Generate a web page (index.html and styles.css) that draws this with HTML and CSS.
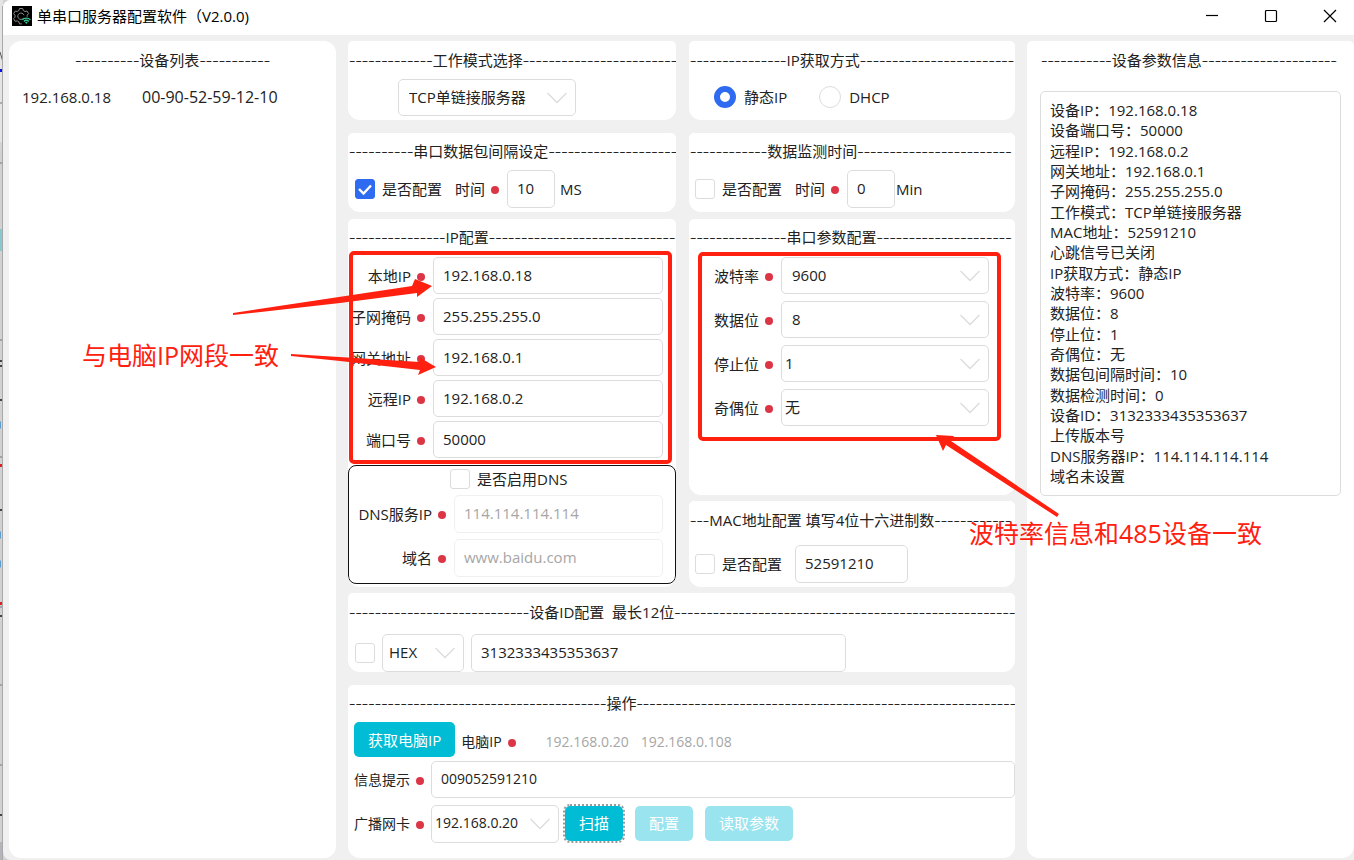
FILE: index.html
```
<!DOCTYPE html>
<html lang="zh-CN">
<head>
<meta charset="utf-8">
<title>单串口服务器配置软件（V2.0.0）</title>
<link rel="stylesheet" href="styles.css">
</head>
<body>
<div class="desktop">
  <svg class="backdrop" viewBox="0 0 3 860" preserveAspectRatio="none" aria-hidden="true">
    <rect width="3" height="860" fill="#d2d2d2"/>
    <rect y="0" width="3" height="142" fill="#e4e4e4"/>
    <rect y="142" width="3" height="8" fill="#d4d4d4"/>
    <rect y="229" width="3" height="22" fill="#86c9cf"/>
    <path d="M0 52l3 10" stroke="#555" stroke-width="1"/>
    <rect y="69" width="3" height="3" fill="#0a10e0"/>
    <path d="M0 103h3M0 163h3M0 340h3M0 457h3M0 607h3M0 685h3M0 765h3" stroke="#777" stroke-width="1"/>
    <path d="M0 361h3M0 366h3M0 400h3M0 510h3M0 616h3M0 815h3" stroke="#444" stroke-width="2"/>
    <path d="M0 425h1M0 535h1M0 564h1" stroke="#5b9fd0" stroke-width="7"/>
    <rect y="464" width="3" height="3" fill="#e02020"/>
    <rect y="602" width="3" height="3" fill="#e02020"/>
    <rect y="842" width="3" height="18" fill="#b4b4ba"/>
    <path d="M2.500 6V860" stroke="#a8a8a8" stroke-width="1"/>
  </svg>

  <div class="window">
    <header class="titlebar">
      <svg class="app-icon" viewBox="0 0 20 20" aria-hidden="true">
        <rect width="20" height="20" fill="#000"/>
        <path d="M7.500 2.500h3.200l.6 2 1.700 1 2-.5 1.600 2.700-1.400 1.500v1.600M7.500 2.500l-.6 2-1.700 1-2-.5L1.600 7.700 3 9.200v2l-1.400 1.500 1.600 2.700 2-.5 1.700 1 .6 2h2.400" fill="none" stroke="#8b8b8b" stroke-width="1"/>
        <path d="M11.500 12.200a3.200 3.200 0 1 1 .5-3" fill="none" stroke="#8b8b8b" stroke-width="1"/>
        <path d="M10.300 13.800c2.300-2.200 5.800-2.200 8.100 0M11.900 15.500c1.400-1.400 3.500-1.400 4.900 0" fill="none" stroke="#35c795" stroke-width="1.300"/>
        <path d="M13 16.300c.8-.7 1.900-.7 2.700 0L14.350 18z" fill="#35c795"/>
      </svg>
      <h1 class="title">单串口服务器配置软件（V2.0.0)</h1>
      <div class="window-buttons">
        <button type="button" aria-label="最小化"><svg viewBox="0 0 14 14"><path d="M1 6.500h12"/></svg></button>
        <button type="button" aria-label="最大化"><svg viewBox="0 0 14 14"><rect x="1.500" y="1.500" width="11" height="11" rx="1"/></svg></button>
        <button type="button" aria-label="关闭"><svg viewBox="0 0 14 14"><path d="M1 1l12 12M13 1L1 13"/></svg></button>
      </div>
    </header>

    <main class="content">
      <section class="card card-list">
        <h2 class="head"><span class="dash">----------</span>设备列表<span class="dash">-----------</span></h2>
        <div class="device"><span>192.168.0.18</span><span class="mac-address">00-90-52-59-12-10</span></div>
      </section>

      <div class="middle">
        <div class="pair">
          <div class="column">
            <section class="card card-mode">
              <h2 class="head"><span class="dash">-------------</span>工作模式选择<span class="dash">------------------------</span></h2>
              <div class="row"><select class="field select mode" aria-label="工作模式选择"><option>TCP单链接服务器</option></select></div>
            </section>

            <section class="card card-timer">
              <h2 class="head"><span class="dash">----------</span>串口数据包间隔设定<span class="dash">--------------------</span></h2>
              <div class="row timer">
                <label class="check"><input type="checkbox" checked>是否配置</label>
                <label class="caption" for="gap">时间<i class="dot"></i></label>
                <input class="field short" id="gap" value="10"><span class="unit">MS</span>
              </div>
            </section>

            <section class="card card-ip">
              <h2 class="head"><span class="dash">---------------</span>IP配置<span class="dash">-----------------------------</span></h2>
              <div class="form ip-form">
                <label class="caption" for="ip">本地IP<i class="dot"></i></label><input class="field" id="ip" value="192.168.0.18">
                <label class="caption" for="mask">子网掩码<i class="dot"></i></label><input class="field" id="mask" value="255.255.255.0">
                <label class="caption" for="gateway">网关地址<i class="dot"></i></label><input class="field" id="gateway" value="192.168.0.1">
                <label class="caption" for="remote">远程IP<i class="dot"></i></label><input class="field" id="remote" value="192.168.0.2">
                <label class="caption" for="port">端口号<i class="dot"></i></label><input class="field" id="port" value="50000">
              </div>
              <div class="dns">
                <label class="check dns-check"><input type="checkbox">是否启用DNS</label>
                <div class="form dns-form">
                  <label class="caption" for="dns">DNS服务IP<i class="dot"></i></label><input class="field" id="dns" value="114.114.114.114" disabled>
                  <label class="caption" for="domain">域名<i class="dot"></i></label><input class="field" id="domain" value="www.baidu.com" disabled>
                </div>
              </div>
            </section>
          </div>

          <div class="column">
            <section class="card card-mode">
              <h2 class="head"><span class="dash">---------------</span>IP获取方式<span class="dash">------------------------</span></h2>
              <div class="row radios">
                <label class="radio"><input type="radio" name="mode" checked>静态IP</label>
                <label class="radio"><input type="radio" name="mode">DHCP</label>
              </div>
            </section>

            <section class="card card-timer">
              <h2 class="head"><span class="dash">------------</span>数据监测时间<span class="dash">------------------------</span></h2>
              <div class="row timer timer-min">
                <label class="check"><input type="checkbox">是否配置</label>
                <label class="caption" for="watch">时间<i class="dot"></i></label>
                <input class="field short" id="watch" value="0"><span class="unit">Min</span>
              </div>
            </section>

            <section class="card card-serial">
              <h2 class="head"><span class="dash">---------------</span>串口参数配置<span class="dash">---------------------</span></h2>
              <div class="form serial-form">
                <label class="caption" for="baud">波特率<i class="dot"></i></label><select class="field select" id="baud"><option>9600</option></select>
                <label class="caption" for="bits">数据位<i class="dot"></i></label><select class="field select" id="bits"><option>8</option></select>
                <label class="caption" for="stop">停止位<i class="dot"></i></label><select class="field select tight" id="stop"><option>1</option></select>
                <label class="caption" for="parity">奇偶位<i class="dot"></i></label><select class="field select tight" id="parity"><option>无</option></select>
              </div>
            </section>

            <section class="card card-mac">
              <h2 class="head"><span class="dash">---</span>MAC地址配置 填写4位十六进制数<span class="dash">------------</span></h2>
              <div class="row mac">
                <label class="check"><input type="checkbox">是否配置</label>
                <input class="field mac-field" aria-label="MAC地址" value="52591210">
              </div>
            </section>
          </div>
        </div>

        <section class="card card-id">
          <h2 class="head"><span class="dash">----------------------------</span>设备ID配置&nbsp; 最长12位<span class="dash">-----------------------------------------------------</span></h2>
          <div class="row id-row">
            <label class="check"><input type="checkbox" aria-label="配置设备ID"></label>
            <select class="field select format" aria-label="格式"><option>HEX</option></select>
            <input class="field id-field" aria-label="设备ID" value="3132333435353637">
          </div>
        </section>

        <section class="card card-ops">
          <h2 class="head"><span class="dash">----------------------------------------</span>操作<span class="dash">-----------------------------------------------------------</span></h2>
          <div class="ops">
            <div class="row ops-row">
              <button type="button" class="button">获取电脑IP</button>
              <span class="caption pc-caption">电脑IP<i class="dot"></i></span>
              <span class="addresses"><span>192.168.0.20</span><span>192.168.0.108</span></span>
            </div>
            <div class="row ops-row">
              <label class="caption ops-caption" for="info">信息提示<i class="dot"></i></label>
              <input class="field info" id="info" value="009052591210">
            </div>
            <div class="row ops-row last">
              <label class="caption ops-caption" for="card">广播网卡<i class="dot"></i></label>
              <select class="field select tight nic" id="card"><option>192.168.0.20</option></select>
              <div class="actions">
                <button type="button" class="button focused">扫描</button>
                <button type="button" class="button" disabled>配置</button>
                <button type="button" class="button" disabled>读取参数</button>
              </div>
            </div>
          </div>
        </section>
      </div>

      <section class="card card-info">
        <h2 class="head"><span class="dash">-----------</span>设备参数信息<span class="dash">---------------------</span></h2>
        <ul class="log">
          <li>设备IP：192.168.0.18</li>
          <li>设备端口号：50000</li>
          <li>远程IP：192.168.0.2</li>
          <li>网关地址：192.168.0.1</li>
          <li>子网掩码：255.255.255.0</li>
          <li>工作模式：TCP单链接服务器</li>
          <li>MAC地址：52591210</li>
          <li>心跳信号已关闭</li>
          <li>IP获取方式：静态IP</li>
          <li>波特率：9600</li>
          <li>数据位：8</li>
          <li>停止位：1</li>
          <li>奇偶位：无</li>
          <li>数据包间隔时间：10</li>
          <li>数据检测时间：0</li>
          <li>设备ID：3132333435353637</li>
          <li>上传版本号</li>
          <li>DNS服务器IP：114.114.114.114</li>
          <li>域名未设置</li>
        </ul>
      </section>
    </main>
  </div>

  <div class="annotations">
    <svg width="1354" height="860" viewBox="0 0 1354 860" aria-hidden="true">
      <rect x="351" y="253" width="319" height="209" rx="3" fill="none" stroke="#ff2010" stroke-width="4"/>
      <rect x="700" y="254" width="299" height="185" rx="3" fill="none" stroke="#ff2010" stroke-width="4"/>
      <path fill="#ff2010" d="M233 313L412 286L415 279L432 286L417 297L417 293L340 303L233 315Z"/>
      <path fill="#ff2010" d="M291 354L420 362L419 357L436 367L418 375L420 370L340 361L291 356Z"/>
      <path fill="#ff2010" d="M936 435L954 436L951 441L1059 514L1057 517L946 445L943 451Z"/>
    </svg>
    <p class="note note-ip">与电脑IP网段一致</p>
    <p class="note note-serial">波特率信息和485设备一致</p>
  </div>
</div>
</body>
</html>
```
FILE: styles.css
```
* { box-sizing: border-box; }
body {
  margin: 0;
  background: #fff;
  color: #222;
  font: 15px/20px "Open Sans", "Noto Sans CJK SC", sans-serif;
}
input, select, button { font: inherit; color: inherit; margin: 0; }
.desktop { position: relative; display: flex; min-height: 100vh; overflow: hidden; background: #d2d2d2; }
.backdrop { flex: none; width: 3px; align-self: stretch; }
.window {
  flex: 1;
  min-width: 0;
  display: flex;
  flex-direction: column;
  background: #f0f0f0;
  border-radius: 8px 0 0 8px;
  overflow: hidden;
}

/* title bar */
.titlebar { display: flex; align-items: center; height: 35px; padding: 0 15px 3px 9px; background: #fff; color: #000; }
.app-icon { width: 20px; height: 20px; margin-right: 5px; }
.title { margin: 0; font-size: 15px; line-height: 20px; font-weight: 400; }
.window-buttons { margin-left: auto; display: flex; gap: 41px; }
.window-buttons button { padding: 0; border: 0; background: none; width: 18px; height: 18px; display: grid; place-items: center; }
.window-buttons svg { width: 14px; height: 14px; fill: none; stroke: #000; stroke-width: 1.2; }

/* panels */
.content {
  flex: 1;
  display: grid;
  grid-template-columns: 327fr 667fr 327fr;
  gap: 12px;
  padding: 6px 0 2px 6px;
}
.card { background: #fff; border-radius: 5px 5px 12px 12px; overflow: hidden; min-width: 0; }
.card-list { border-radius: 12px; }
.head {
  display: flex;
  margin: 0;
  padding-left: 1px;
  font-size: 15px;
  font-weight: 400;
  line-height: 38px;
  white-space: nowrap;
}
.dash { font-size: 20px; font-weight: 300; }
.card-list .head { padding-left: 66px; }
.device { display: flex; gap: 31px; padding: 8px 13px; }
.mac-address { font-size: 16px; }
.middle { min-width: 0; display: flex; flex-direction: column; }
.pair { display: grid; grid-template-columns: 328fr 326fr; gap: 13px; }
.column { min-width: 0; display: flex; flex-direction: column; }
.card-mode { margin-bottom: 13px; padding-bottom: 4px; }
.card-timer { margin-bottom: 7px; padding-bottom: 4px; }
.card-timer .head { padding-bottom: 1px; line-height: 36px; }
.card-ip { flex: 1; padding-bottom: 3px; }
.card-serial { flex: 1; margin-bottom: 6px; }
.card-ip .head, .card-serial .head { padding-bottom: 2px; line-height: 36px; }
.card-mac { padding-bottom: 4px; }
.card-mac .head { padding-bottom: 6px; }
.card-id { margin: 6px 0 13px; }
.card-id .head { padding-bottom: 3px; }
.card-ops { flex: 1; }
.card-ops .head { padding-bottom: 1px; line-height: 36px; }

/* fields */
.field {
  height: 37px;
  min-width: 0;
  width: 100%;
  padding: 0 9px 2px;
  border: 1px solid #dcdcdc;
  border-radius: 5px;
  background: #fff;
  outline: 0;
}
.field:disabled { color: #a6a6a6; border-color: #f0f0f0; }
.select {
  appearance: none;
  padding-left: 10px;
  background: #fff url("data:image/svg+xml,%3Csvg xmlns='http://www.w3.org/2000/svg' width='20' height='12'%3E%3Cpath d='M.5 1l9.500 9.500L19.500 1' fill='none' stroke='%23dcdcdc' stroke-width='1.300'/%3E%3C/svg%3E") no-repeat right 8px center;
}
.select.tight { padding-left: 3px; }
.row { display: flex; align-items: center; }
.caption { display: flex; align-items: center; justify-content: flex-end; gap: 6px; white-space: nowrap; }
.dot { width: 8px; height: 8px; margin-top: 2px; border-radius: 50%; background: #dc3545; }
.check, .radio { display: flex; align-items: center; gap: 7px; white-space: nowrap; }
.check input { appearance: none; width: 20px; height: 20px; border: 1px solid #dcdcdc; border-radius: 3px; background: #fff; }
.check input:checked {
  border-color: #2f6bf0;
  background: #2f6bf0 url("data:image/svg+xml,%3Csvg xmlns='http://www.w3.org/2000/svg' width='18' height='18'%3E%3Cpath d='M3 9l4.500 4.500L15 5.500' fill='none' stroke='white' stroke-width='2.400'/%3E%3C/svg%3E") center no-repeat;
}
.radio { gap: 8px; }
.radio input { appearance: none; width: 22px; height: 22px; border: 1px solid #dcdcdc; border-radius: 50%; background: #fff; }
.radio input:checked { border: 6px solid #2f6bf0; }

.mode { width: 178px; margin-left: 50px; }
.radios { height: 37px; padding: 0 0 2px 25px; gap: 32px; }
.timer { padding-left: 7px; }
.timer .caption { margin: 0 8px 0 13px; }
.timer .field { width: 48px; height: 38px; }
.unit { margin-left: 5px; }
.timer-min { padding-left: 6px; }
.timer-min .unit { margin-left: 1px; }
.form { display: grid; }
.ip-form { grid-template-columns: 85px 1fr; gap: 4px 0; padding-right: 13px; }
.form .caption { padding-right: 8px; }
.serial-form { grid-template-columns: 92px 1fr; gap: 7px 0; padding-right: 26px; }
.dns { margin-top: 7px; padding: 3px 12px 6px 0; border: 1px solid #111; border-radius: 8px; }
.dns-check { padding-left: 101px; }
.dns-form { grid-template-columns: 105px 1fr; gap: 6px 0; margin-top: 6px; }
.dns-form .field { height: 38px; }
.mac { padding-left: 6px; gap: 13px; }
.mac-field { width: 113px; height: 38px; }
.id-row { padding-left: 7px; gap: 7px; }
.format { width: 82px; height: 38px; padding-left: 6px; }
.id-field { width: 375px; height: 38px; }

/* operations */
.ops { display: grid; gap: 4px; padding-left: 6px; font-size: 14px; }
.ops-caption { width: 77px; justify-content: flex-start; flex: none; }
.pc-caption { margin-left: 6px; padding-top: 4px; }
.addresses { display: flex; gap: 12px; margin-left: 30px; padding-top: 4px; color: #a6a6a6; }
.nic { width: 128px; height: 38px; }
.last { padding-top: 3px; }
.actions { display: flex; gap: 12px; margin-left: 6px; padding-bottom: 2px; }
.button {
  height: 35px;
  padding: 0 14px;
  border: 0;
  border-radius: 5px;
  background: #00bcd4;
  color: #fff;
  font-size: 15px;
  white-space: nowrap;
}
.button:disabled { background: #99e4ee; }
.focused { outline: 2px dotted #999; }

/* device info */
.card-info { padding: 0 13px; }
.log {
  display: flex;
  flex-direction: column;
  justify-content: space-between;
  min-height: 405px;
  margin: 12px 0 0;
  padding: 8px 9px 9px;
  list-style: none;
  border: 1px solid #dcdcdc;
  border-radius: 5px;
}

/* markup drawn over the window */
.annotations { position: absolute; inset: 0; pointer-events: none; }
.annotations svg { display: block; }
.note { position: absolute; margin: 0; color: #ff2010; font-size: 25px; line-height: 32px; white-space: nowrap; }
.note-ip { left: 82px; top: 339px; }
.note-serial { left: 969px; top: 517px; }
```
